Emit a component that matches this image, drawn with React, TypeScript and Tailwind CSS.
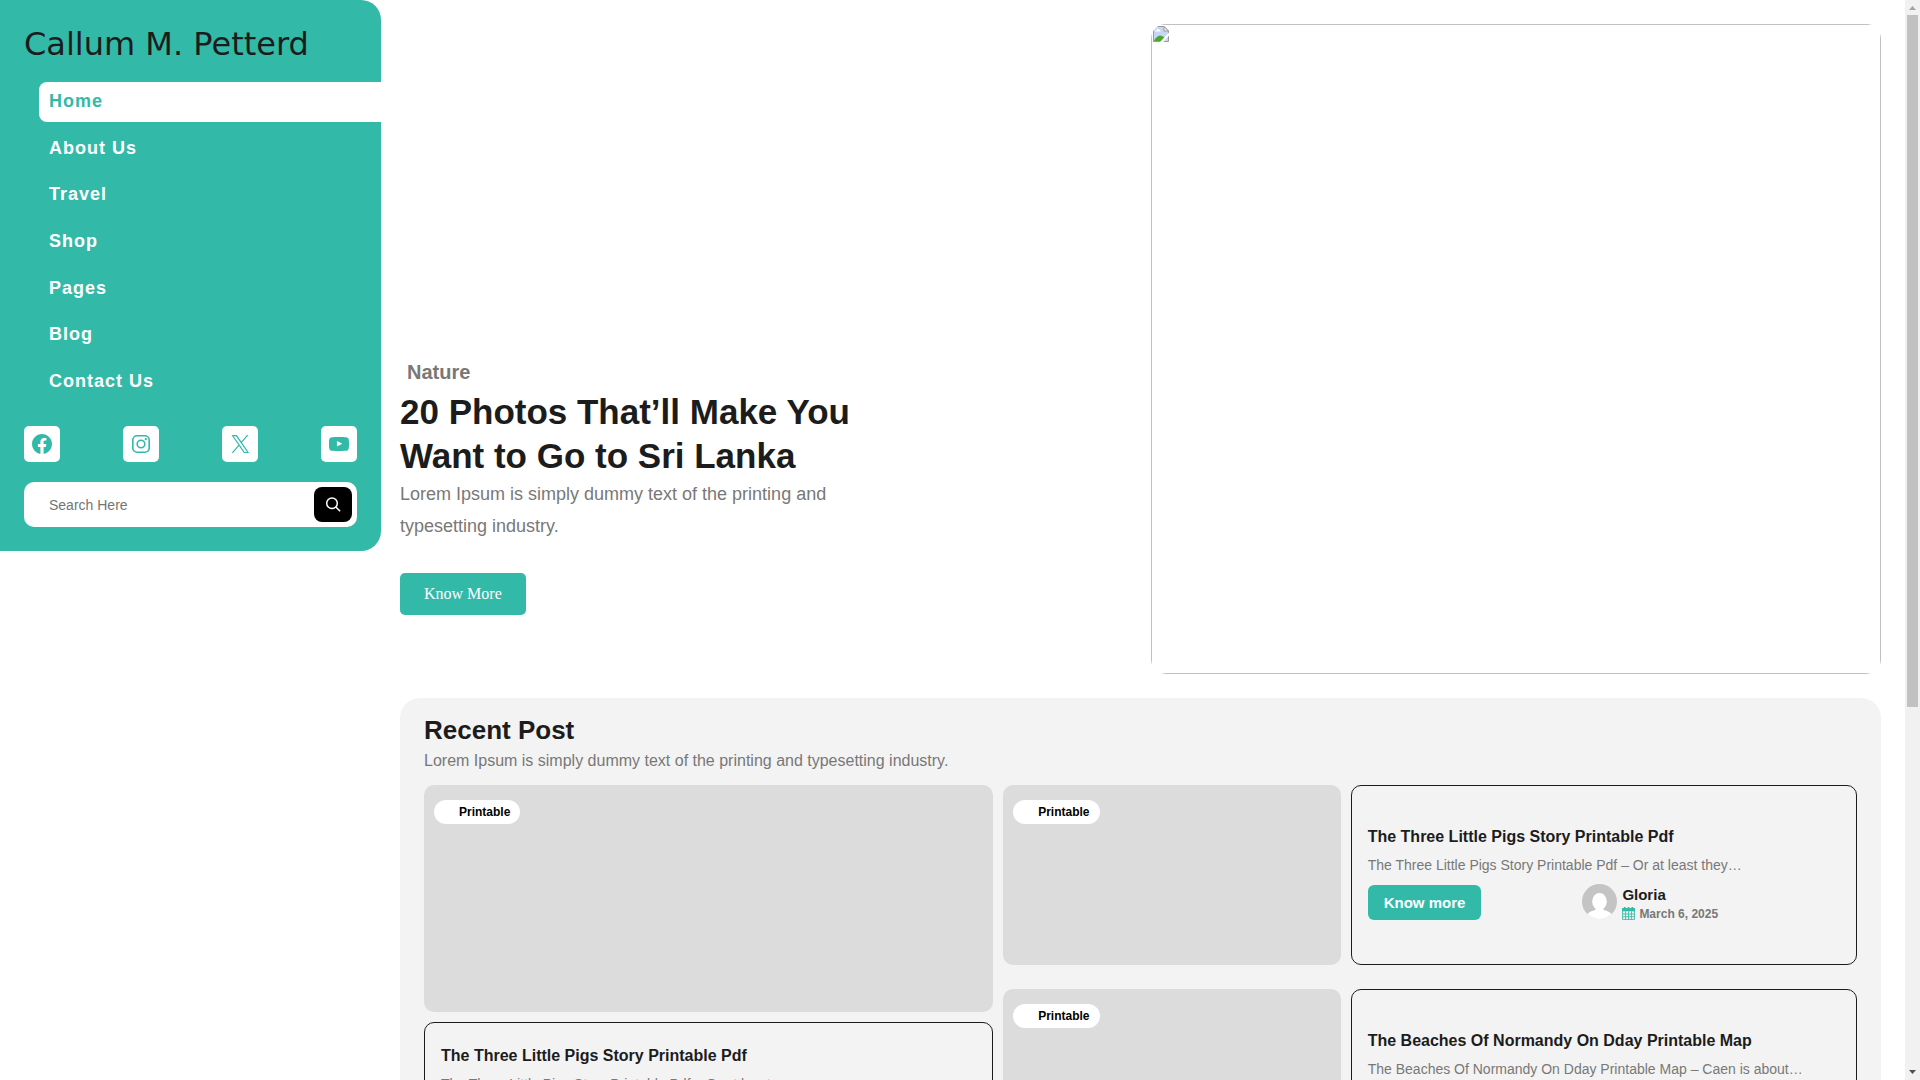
import React, { useState } from 'react';

const navItems = ['Home', 'About Us', 'Travel', 'Shop', 'Pages', 'Blog', 'Contact Us'];

const socialLinks = [
  {
    name: 'Facebook',
    icon: (
      <path d="M12 2C6.5 2 2 6.5 2 12c0 5 3.7 9.1 8.4 9.9v-7H7.9V12h2.5V9.8c0-2.5 1.5-3.9 3.8-3.9 1.1 0 2.2.2 2.2.2v2.5h-1.3c-1.2 0-1.6.8-1.6 1.6V12h2.8l-.4 2.9h-2.3v7C18.3 21.1 22 17 22 12c0-5.5-4.5-10-10-10z" />
    ),
  },
  {
    name: 'Instagram',
    icon: (
      <>
        <rect x="3.8" y="3.8" width="16.4" height="16.4" rx="4.3" fill="none" stroke="currentColor" strokeWidth="1.62" />
        <circle cx="12" cy="12" r="3.8" fill="none" stroke="currentColor" strokeWidth="1.62" />
        <circle cx="16.8" cy="7.2" r="1.08" />
      </>
    ),
  },
  {
    name: 'X',
    icon: (
      <path d="M13.982 10.622 20.54 3h-1.554l-5.693 6.618L8.745 3H3.5l6.876 10.007L3.5 21h1.554l6.012-6.989L15.868 21h5.245l-7.131-10.378Zm-2.128 2.474-.697-.997-5.543-7.93H8l4.474 6.4.697.996 5.815 8.318h-2.387l-4.745-6.787Z" />
    ),
  },
  {
    name: 'YouTube',
    icon: (
      <path d="M21.8 8.001s-.195-1.378-.795-1.985c-.76-.797-1.613-.801-2.004-.847-2.799-.202-6.997-.202-6.997-.202h-.009s-4.198 0-6.997.202c-.39.047-1.242.051-2.003.847-.6.607-.795 1.985-.795 1.985S2 9.62 2 11.238v1.517c0 1.618.2 3.237.2 3.237s.195 1.378.795 1.985c.761.797 1.76.771 2.205.855 1.6.153 6.8.201 6.8.201s4.203-.006 7.001-.209c.391-.047 1.243-.051 2.004-.847.6-.607.795-1.985.795-1.985s.2-1.618.2-3.237v-1.517C22 9.62 21.8 8.001 21.8 8.001zM9.935 14.594l-.001-5.62 5.404 2.82-5.403 2.8z" />
    ),
  },
];

interface Post {
  title: string;
  excerpt: string;
  author: string;
  date: string;
}

const featuredPost: Post = {
  title: 'The Three Little Pigs Story Printable Pdf',
  excerpt: 'The Three Little Pigs Story Printable Pdf – Or at least…',
  author: 'Gloria',
  date: 'March 6, 2025',
};

const posts: Post[] = [
  {
    title: 'The Three Little Pigs Story Printable Pdf',
    excerpt: 'The Three Little Pigs Story Printable Pdf – Or at least they…',
    author: 'Gloria',
    date: 'March 6, 2025',
  },
  {
    title: 'The Beaches Of Normandy On Dday Printable Map',
    excerpt: 'The Beaches Of Normandy On Dday Printable Map – Caen is about…',
    author: 'Gloria',
    date: 'March 6, 2025',
  },
];

const Sidebar: React.FC = () => {
  const [active, setActive] = useState('Home');
  const [query, setQuery] = useState('');

  return (
    <aside className="w-1/5 shrink-0 self-start rounded-r-[20px] bg-[#33b9a8] pb-6 pt-5">
      <h1 className="px-6 font-['DejaVu_Sans',sans-serif] text-[32px] leading-[48px] text-[#1c1c1c]">
        <a href="#home">Callum M. Petterd</a>
      </h1>

      <nav className="mt-[14px] flex h-80 flex-col justify-between pl-[39px]">
        {navItems.map(item => (
          <a
            key={item}
            href="#"
            onClick={() => setActive(item)}
            className={`block h-10 rounded-l-lg pl-[10px] text-[18px] font-bold leading-[38px] tracking-[1px] ${
              active === item ? 'bg-white text-[#33b9a8]' : 'text-white'
            }`}
          >
            {item}
          </a>
        ))}
      </nav>

      <div className="mt-6 flex justify-between px-6">
        {socialLinks.map(link => (
          <a
            key={link.name}
            href="#"
            aria-label={link.name}
            className="flex h-9 w-9 items-center justify-center rounded-[5px] bg-white text-[#33b9a8]"
          >
            <svg viewBox="0 0 24 24" className="h-6 w-6" fill="currentColor">
              {link.icon}
            </svg>
          </a>
        ))}
      </div>

      <form className="mx-6 mt-5 flex h-[45px] items-center rounded-[10px] bg-white pl-[25px] pr-[5px]" onSubmit={e => e.preventDefault()}>
        <input
          type="search"
          aria-label="Search"
          placeholder="Search Here"
          value={query}
          onChange={e => setQuery(e.target.value)}
          className="min-w-0 flex-1 bg-transparent text-sm text-[#1c1c1c] outline-none placeholder:text-[#757575]"
        />
        <button type="submit" aria-label="Submit search" className="flex h-[35px] w-[38px] items-center justify-center rounded-lg bg-black text-white">
          <svg viewBox="0 0 24 24" className="h-6 w-6" fill="none" stroke="currentColor" strokeWidth="1.5">
            <circle cx="11" cy="10.2" r="5.3" />
            <path d="M14.8 14l4.3 4.200" />
          </svg>
        </button>
      </form>
    </aside>
  );
};

// Placeholder frame with the small torn-page icon
const MissingImage: React.FC = () => (
  <div className="h-full overflow-hidden rounded-[15px]">
    <div className="h-full border border-[#c0c0c0]">
      <svg viewBox="0 0 16 16" className="ml-px mt-px h-4 w-4">
        <path d="M0.5 0.5h10.5l4.5 4.5v10.5h-15z" fill="#c6d6f7" stroke="#9a9a9a" />
        <path d="M2 5.5q0-1.5 1.6-1.5Q4.5 2 6 3.5q1.5 0 1.5 2z" fill="#fff" />
        <path d="M1 15q1.5-4.500 6-5.500 3 0 5 2.500l-3 3z" fill="#4ea52f" />
        <path d="M11 0.5v4.5h4.5z" fill="#f4f4f4" stroke="#9a9a9a" />
        <path d="M16 6.5v3L10.5 16H7z" fill="#fff" />
      </svg>
    </div>
  </div>
);

const Hero: React.FC = () => (
  <section className="grid h-[650px] grid-cols-2 gap-5">
    <div className="flex flex-col items-start justify-end pb-[59px]">
      <a href="#" className="pl-[7px] text-[20px] font-bold leading-6 text-[#787878]">
        Nature
      </a>
      <h2 className="mt-[6px] max-w-[500px] text-[35px] font-bold leading-[44px] text-[#1c1c1c]">
        20 Photos That’ll Make You Want to Go to Sri Lanka
      </h2>
      <p className="max-w-[500px] text-[18px] leading-8 text-[#787878]">
        Lorem Ipsum is simply dummy text of the printing and typesetting industry.
      </p>
      <a href="#" className="mt-[31px] rounded-[5px] bg-[#33b9a8] px-6 font-['Liberation_Serif',serif] text-[16px] leading-[42px] text-white">
        Know More
      </a>
    </div>
    <MissingImage />
  </section>
);

const Thumbnail: React.FC<{ className: string }> = ({ className }) => (
  <div className={`flex items-start rounded-[10px] bg-[#dcdcdc] px-[10px] pt-[15px] ${className}`}>
    <a href="#" className="rounded-full bg-white pl-[25px] pr-[10px] text-xs font-bold leading-6 text-black">
      Printable
    </a>
  </div>
);

const Avatar: React.FC = () => (
  <svg viewBox="0 0 35 35" className="h-[35px] w-[35px] shrink-0">
    <defs>
      <clipPath id="avatar">
        <circle cx="17.5" cy="17.5" r="17.5" />
      </clipPath>
    </defs>
    <g clipPath="url(#avatar)">
      <rect width="35" height="35" fill="#c4c4c4" />
      <ellipse cx="17.5" cy="17.5" rx="7.3" ry="8.5" fill="#fff" />
      <path d="M13.5 23h8v3q6 1 9 5v5h-26v-5q3-4 9-5z" fill="#fff" />
    </g>
  </svg>
);

const CalendarIcon: React.FC = () => (
  <svg viewBox="0 0 12 12" className="h-[13px] w-[13px] text-[#33b9a8]" fill="none" stroke="currentColor">
    <path d="M0 2.5h12" strokeWidth="3" />
    <path d="M2.5 0v2M6 0v2M9.5 0v2" strokeWidth="1.5" />
    <path d="M0.5 3v8.5h11v-8.5M3.3 4v7.5M6 4v7.5M8.7 4v7.5M0.5 6.5h11M0.5 9h11" strokeWidth="0.8" />
  </svg>
);

const PostCard: React.FC<{ post: Post; className: string }> = ({ post, className }) => (
  <article className={`flex flex-col rounded-[10px] border border-[#1c1c1c] px-4 ${className}`}>
    <h3 className="text-[16px] font-bold leading-6 text-[#1c1c1c]">{post.title}</h3>
    <p className="mt-1 text-[14px] leading-6 text-[#787878]">{post.excerpt}</p>
    <div className="mt-[7px] grid grid-cols-[5fr_6fr] items-start">
      <div className="flex pt-px">
        <a href="#" className="rounded-md bg-[#33b9a8] px-4 text-[15px] font-bold leading-[35px] text-white">
          Know more
        </a>
      </div>
      <div className="flex gap-[5px]">
        <Avatar />
        <div>
          <p className="text-[15px] font-bold leading-[22px] text-[#1c1c1c]">{post.author}</p>
          <p className="flex items-center gap-1 text-xs font-bold text-[#787878]">
            <CalendarIcon />
            {post.date}
          </p>
        </div>
      </div>
    </div>
  </article>
);

const RecentPosts: React.FC = () => (
  <section className="mt-6 rounded-[20px] bg-[#f3f3f3] px-6 pb-6 pt-4">
    <h2 className="text-[26px] font-bold leading-8 text-[#1c1c1c]">Recent Post</h2>
    <p className="mt-1 text-[16px] leading-[22px] text-[#787878]">
      Lorem Ipsum is simply dummy text of the printing and typesetting industry.
    </p>
    <div className="mt-[13px] grid grid-cols-[2fr_3fr] gap-[10px]">
      <div className="flex flex-col gap-[10px]">
        <Thumbnail className="h-[227px]" />
        <PostCard post={featuredPost} className="py-[21px]" />
      </div>
      <div className="flex flex-col gap-6">
        {posts.map(post => (
          <div key={post.title} className="grid grid-cols-[2fr_3fr] gap-[10px]">
            <Thumbnail className="h-[180px]" />
            <PostCard post={post} className="justify-center pb-1" />
          </div>
        ))}
      </div>
    </div>
  </section>
);

const ScrollTrack: React.FC = () => (
  <div className="flex w-[15px] shrink-0 flex-col items-center bg-[#f1f1f1]">
    <svg viewBox="0 0 15 15" className="h-[15px] w-[15px]">
      <path d="M4 10h7L7.5 6z" fill="#a3a3a3" />
    </svg>
    <div className="w-[11px] flex-[692] bg-[#c1c1c1]" />
    <div className="flex-[358]" />
    <svg viewBox="0 0 15 15" className="h-[15px] w-[15px]">
      <path d="M4 5h7L7.5 9z" fill="#505050" />
    </svg>
  </div>
);

const App: React.FC = () => {
  return (
    <div className="flex h-screen overflow-hidden bg-white font-['Liberation_Sans',Arial,sans-serif]">
      <div className="flex min-w-0 flex-1 overflow-hidden">
        <Sidebar />
        <main className="min-w-0 flex-1 pl-[19px] pr-6 pt-6">
          <Hero />
          <RecentPosts />
        </main>
      </div>
      <ScrollTrack />
    </div>
  );
};

export default App;
